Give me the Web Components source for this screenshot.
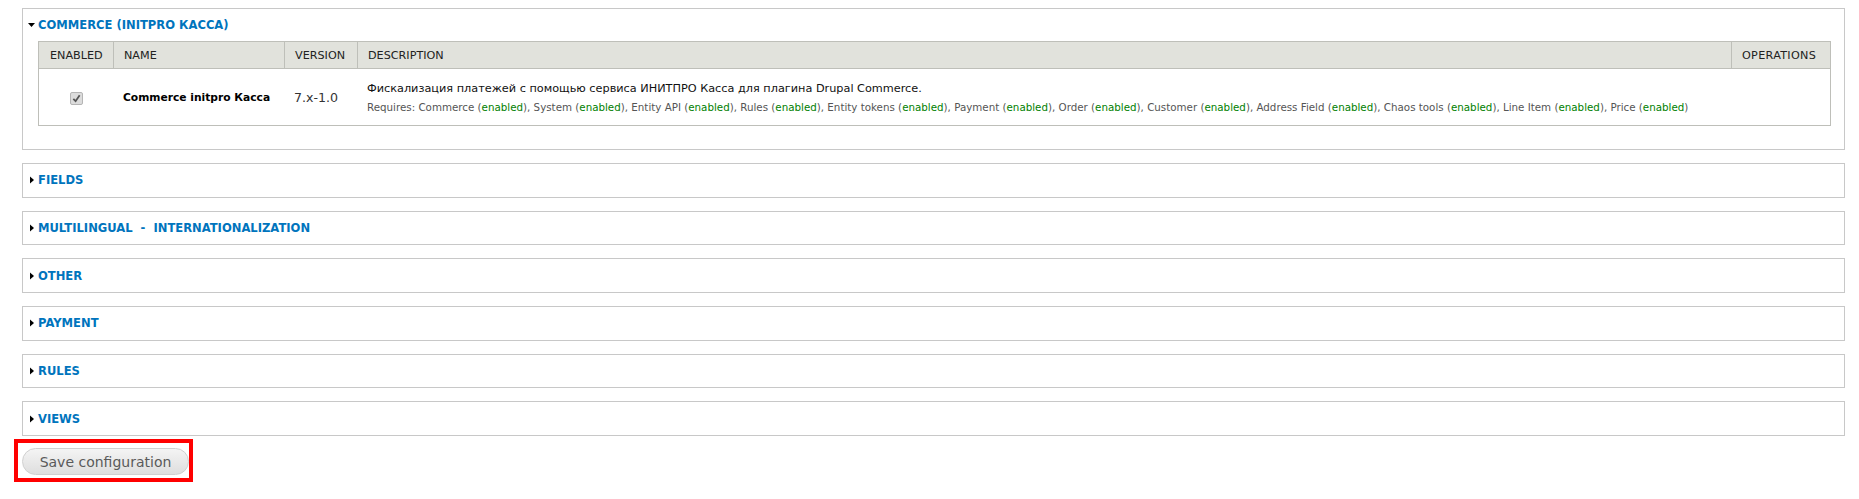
<!DOCTYPE html>
<html>
<head>
<meta charset="utf-8">
<title>Modules</title>
<style>
    html, body { margin: 0; background: #fff; }
    body {
        padding: 8px 14px 0 22px;
        font-family: "DejaVu Sans", sans-serif;
        font-size: 11px;
        color: #000;
    }
</style>
</head>
<body>
<module-page>
    <module-group label="COMMERCE (INITPRO КАССА)" open>
        <module-table></module-table>
    </module-group>
    <module-group label="FIELDS"></module-group>
    <module-group label="MULTILINGUAL - INTERNATIONALIZATION" style="--word-gap: 4px"></module-group>
    <module-group label="OTHER"></module-group>
    <module-group label="PAYMENT"></module-group>
    <module-group label="RULES"></module-group>
    <module-group label="VIEWS"></module-group>
    <save-button>Save configuration</save-button>
</module-page>

<script>
// Page wrapper
class ModulePage extends HTMLElement {
    constructor() {
        super();
        this.attachShadow({ mode: 'open' });
    }

    connectedCallback() {
        this.shadowRoot.innerHTML = `
            <style>
                :host {
                    display: flex;
                    flex-direction: column;
                    gap: 13px;
                }
            </style>
            <slot></slot>
        `;
    }
}

// Collapsible fieldset
class ModuleGroup extends HTMLElement {
    constructor() {
        super();
        this.attachShadow({ mode: 'open' });
    }

    connectedCallback() {
        const open = this.hasAttribute('open');
        this.shadowRoot.innerHTML = `
            <style>
                :host {
                    display: block;
                    border: 1px solid #c8c8c8;
                    padding: 0 13px 0 15px;
                }
                .legend {
                    display: flex;
                    align-items: center;
                    height: ${open ? '32px' : '32.65px'};
                    margin-left: -10px;
                    font-size: 11.55px;
                    font-weight: bold;
                    color: #0074bd;
                    word-spacing: var(--word-gap, 0);
                }
                svg { width: 8px; height: 8px; margin-right: 2px; }
                .body { padding-bottom: 23px; }
            </style>
            <div class="legend">
                <svg viewBox="0 0 8 8">
                    <path d="${open ? 'M0 2h7L3.5 6z' : 'M2 0.5l4 3.5-4 3.5z'}" fill="#000"/>
                </svg>
                <span>${this.getAttribute('label')}</span>
            </div>
            ${open ? '<div class="body"><slot></slot></div>' : ''}
        `;
    }
}

// Table of modules
class ModuleTable extends HTMLElement {
    constructor() {
        super();
        this.attachShadow({ mode: 'open' });
    }

    connectedCallback() {
        const deps = ['Commerce', 'System', 'Entity API', 'Rules', 'Entity tokens', 'Payment',
            'Order', 'Customer', 'Address Field', 'Chaos tools', 'Line Item', 'Price'];
        const requires = deps.map(d => `${d} (<span class="ok">enabled</span>)`).join(', ');

        this.shadowRoot.innerHTML = `
            <style>
                :host { display: block; }
                .grid {
                    display: grid;
                    grid-template-columns: 74px 171px 73px 1fr 99px;
                    border: 1px solid #bebfb9;
                }
                .th {
                    height: 27px;
                    box-sizing: border-box;
                    display: flex;
                    align-items: center;
                    background: #e1e2dc;
                    border-bottom: 1px solid #bebfb9;
                    border-left: 1px solid #bebfb9;
                    padding-left: 10px;
                    font-size: 11.2px;
                    color: #222;
                }
                .th:first-child { border-left: 0; padding-left: 11px; }
                .th:nth-child(5) { letter-spacing: 0.3px; }
                .td {
                    height: 56px;
                    display: flex;
                    align-items: center;
                    padding-left: 10px;
                }
                .check { justify-content: center; padding-left: 0; }
                .box {
                    width: 13px;
                    height: 13px;
                    box-sizing: border-box;
                    margin-top: 2px;
                    border: 1px solid #b5b5b5;
                    border-radius: 2px;
                    background: #dcdcdc;
                    display: flex;
                    align-items: center;
                    justify-content: center;
                }
                .box svg { width: 9px; height: 9px; }
                .name { font-weight: bold; color: #000; font-size: 10.7px; }
                .ver { font-size: 12.6px; color: #333; }
                .desc { flex-direction: column; align-items: flex-start; justify-content: center; gap: 6px; }
                .main { font-size: 11.28px; color: #111; }
                .req { font-size: 10.3px; color: #555; }
                .ok { color: #008000; }
            </style>
            <div class="grid">
                <div class="th">ENABLED</div>
                <div class="th">NAME</div>
                <div class="th">VERSION</div>
                <div class="th">DESCRIPTION</div>
                <div class="th">OPERATIONS</div>
                <div class="td check">
                    <span class="box"><svg viewBox="0 0 10 10"><path d="M1.5 5.5l2.5 2.5 4.5-6.5" fill="none" stroke="#555" stroke-width="2"/></svg></span>
                </div>
                <div class="td name">Commerce initpro Касса</div>
                <div class="td ver">7.x-1.0</div>
                <div class="td desc">
                    <div class="main">Фискализация платежей с помощью сервиса ИНИТПРО Касса для плагина Drupal Commerce.</div>
                    <div class="req">Requires: ${requires}</div>
                </div>
                <div class="td"></div>
            </div>
        `;
    }
}

// Save button with the red highlight drawn round it
class SaveButton extends HTMLElement {
    constructor() {
        super();
        this.attachShadow({ mode: 'open' });
    }

    connectedCallback() {
        this.shadowRoot.innerHTML = `
            <style>
                :host {
                    display: block;
                    align-self: flex-start;
                    margin: -9.6px 0 0 -8px;
                }
                .mark {
                    display: inline-block;
                    border: 4px solid #f00;
                    padding: 5px 0 3px 4px;
                }
                button {
                    display: block;
                    width: 167px;
                    height: 27px;
                    border: 1px solid #d0d0d0;
                    border-radius: 14px;
                    background: linear-gradient(#f4f4f4, #dedede);
                    font: 14px "DejaVu Sans", sans-serif;
                    color: #5a5a5a;
                    padding: 0;
                }
            </style>
            <div class="mark"><button><slot></slot></button></div>
        `;
    }
}

customElements.define('module-page', ModulePage);
customElements.define('module-group', ModuleGroup);
customElements.define('module-table', ModuleTable);
customElements.define('save-button', SaveButton);
</script>
</body>
</html>
